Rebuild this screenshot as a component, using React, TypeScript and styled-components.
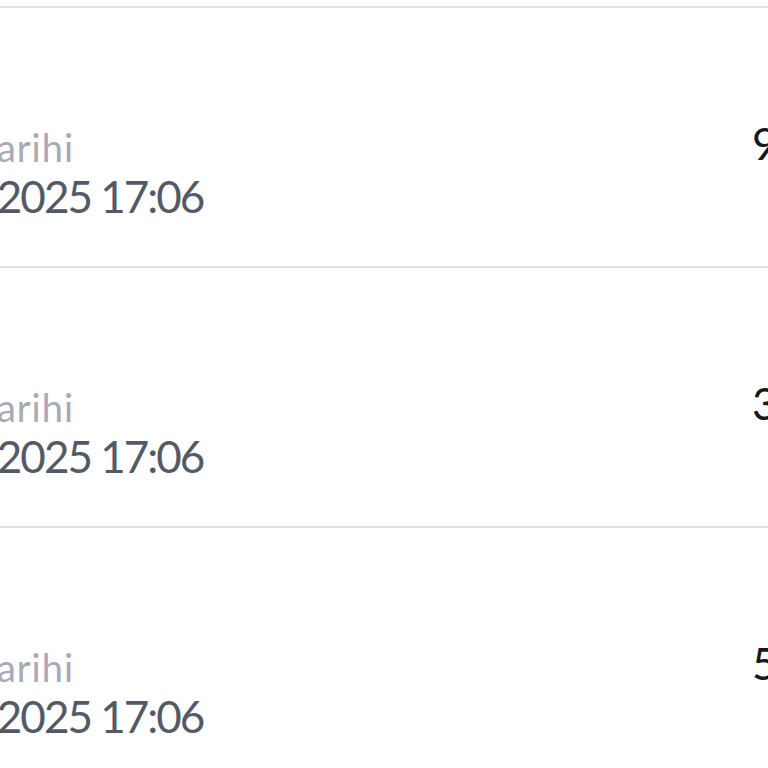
import React from "react";
import styled, { createGlobalStyle } from "styled-components";

const GlobalStyle = createGlobalStyle`
  html, body {
    margin: 0;
    padding: 0;
    background: #ffffff;
    overflow: hidden;
  }
  body {
    font-family: Lato, "Open Sans", "Liberation Sans", sans-serif;
  }
`;

const Page = styled.div`
  width: 768px;
  height: 768px;
  overflow: hidden;
  background: #ffffff;
`;

const List = styled.div`
  margin-top: 6px;
  border-top: 2px solid #e0e0e6;
`;

const Row = styled.div`
  display: flex;
  align-items: flex-start;
  justify-content: space-between;
  height: 258px;
  border-bottom: 2px solid #dfdfe6;
  box-sizing: content-box;
`;

const Info = styled.div`
  display: flex;
  flex-direction: column;
  margin-left: -114px;
  padding-top: 117px;
  white-space: nowrap;
`;

const Label = styled.span`
  font-size: 38px;
  line-height: 44px;
  letter-spacing: 1px;
  word-spacing: -1px;
  color: #a9aab3;
`;

const DateText = styled.span`
  font-size: 44px;
  line-height: 54px;
  letter-spacing: -2px;
  color: #535a66;
`;

const Amount = styled.div`
  flex: 0 0 auto;
  width: 240px;
  margin-right: -224px;
  padding-top: 108px;
  font-size: 44px;
  line-height: 54px;
  letter-spacing: -2px;
  color: #17171f;
  white-space: nowrap;
`;

const items = [
  { label: "Satış Tarihi", date: "16.06.2025 17:06", amount: "950,00 ₺" },
  { label: "Satış Tarihi", date: "16.06.2025 17:06", amount: "350,00 ₺" },
  { label: "Satış Tarihi", date: "16.06.2025 17:06", amount: "500,00 ₺" },
];

export default function App() {
  return (
    <Page>
      <GlobalStyle />
      <List>
        {items.map((it, i) => (
          <Row key={i}>
            <Info>
              <Label>{it.label}</Label>
              <DateText>{it.date}</DateText>
            </Info>
            <Amount>{it.amount}</Amount>
          </Row>
        ))}
      </List>
    </Page>
  );
}
